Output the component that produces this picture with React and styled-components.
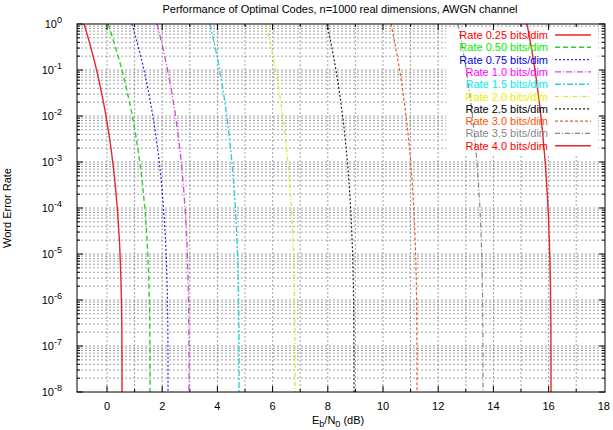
import React from "react";
import styled, { createGlobalStyle } from "styled-components";

const Global = createGlobalStyle`
  html, body { margin: 0; padding: 0; background: #fff; }
`;

const Frame = styled.div`
  width: 613px;
  height: 430px;
  background: #fff;
  font-family: "Liberation Sans", Arial, sans-serif;
`;

const Chart = styled.svg`
  display: block;
  font-family: "Liberation Sans", Arial, sans-serif;
  font-size: 11px;
`;

const L = 77, R = 605, T = 24, B = 392;
const xs = (v) => 107 + 27.6 * v;
const ys = (d) => T + 46 * d; // d decades below 1

const curves = [
  { label: "Rate 0.25 bits/dim", color: "#e8262a", x0: 84, x1: 122, dash: "", w: 1.4, tc: "#ff0000" },
  { label: "Rate 0.50 bits/dim", color: "#2fcf2f", x0: 108, x1: 150, dash: "5,3", w: 1.4, tc: "#00ee00" },
  { label: "Rate 0.75 bits/dim", color: "#2a2ad8", x0: 132, x1: 168, dash: "2,2", w: 1.2, tc: "#0000ee" },
  { label: "Rate 1.0 bits/dim", color: "#d050d8", x0: 157, x1: 189, dash: "6,2,1,2", w: 1.4, tc: "#ff00ff" },
  { label: "Rate 1.5 bits/dim", color: "#2cd0d8", x0: 210, x1: 239, dash: "6,2,2,2", w: 1.4, tc: "#00eeee" },
  { label: "Rate 2.0 bits/dim", color: "#e0e020", x0: 266, x1: 295, dash: "4,2,1,2", w: 1.2, tc: "#eeee00" },
  { label: "Rate 2.5 bits/dim", color: "#222", x0: 327, x1: 354, dash: "2,2", w: 1.2, tc: "#000" },
  { label: "Rate 3.0 bits/dim", color: "#e06030", x0: 391, x1: 417, dash: "3,2", w: 1.2, tc: "#ff5500" },
  { label: "Rate 3.5 bits/dim", color: "#888", x0: 458, x1: 483, dash: "5,2,1,2", w: 1.2, tc: "#888" },
  { label: "Rate 4.0 bits/dim", color: "#e8262a", x0: 527, x1: 551, dash: "", w: 1.4, tc: "#ff0000" },
];

function curvePath(c) {
  const pts = [];
  for (let i = 0; i <= 60; i++) {
    const s = i / 60;
    const f = 1 - Math.pow(1 - s, 3);
    pts.push(`${(c.x0 + (c.x1 - c.x0) * f).toFixed(1)},${ys(s * 8).toFixed(1)}`);
  }
  return "M" + pts.join(" L");
}

const grid = "#8a8a8a";

export default function App() {
  const vGrid = [];
  for (let v = 0; v <= 17; v++) vGrid.push(xs(v));
  const hGrid = [];
  const minor = [];
  for (let d = 0; d < 8; d++) {
    for (let m = 2; m <= 9; m++) {
      const y = ys(d + 1 - Math.log10(m));
      hGrid.push(y);
      minor.push(y);
    }
    if (d > 0) hGrid.push(ys(d));
  }
  return (
    <Frame>
      <Global />
      <Chart width="613" height="430" viewBox="0 0 613 430">
        <text x="340" y="13" textAnchor="middle">Performance of Optimal Codes, n=1000 real dimensions, AWGN channel</text>
        {vGrid.map((x, i) => (
          <line key={"v" + i} x1={x} x2={x} y1={T} y2={B} stroke={grid} strokeDasharray="2,2" strokeWidth="0.8" />
        ))}
        {hGrid.map((y, i) => (
          <line key={"h" + i} x1={L} x2={R} y1={y} y2={y} stroke={grid} strokeDasharray="2,2" strokeWidth="0.8" />
        ))}
        <rect x="446" y="27" width="152" height="127" fill="#fff" />
        {vGrid.map((x, i) => {
          const len = i % 2 === 0 ? 6 : 3;
          return (
            <g key={"t" + i}>
              <line x1={x} x2={x} y1={B} y2={B - len} stroke="#000" />
              <line x1={x} x2={x} y1={T} y2={T + len} stroke="#000" />
            </g>
          );
        })}
        {minor.map((y, i) => (
          <g key={"m" + i}>
            <line x1={L} x2={L + 3} y1={y} y2={y} stroke="#000" />
            <line x1={R} x2={R - 3} y1={y} y2={y} stroke="#000" />
          </g>
        ))}
        {[0, 1, 2, 3, 4, 5, 6, 7, 8].map((d) => (
          <g key={"yd" + d}>
            <line x1={L} x2={L + 6} y1={ys(d)} y2={ys(d)} stroke="#000" />
            <line x1={R} x2={R - 6} y1={ys(d)} y2={ys(d)} stroke="#000" />
            <text x="62" y={ys(d) + 4} textAnchor="end">
              10<tspan dy="-5" fontSize="9">{d === 0 ? "0" : "-" + d}</tspan>
            </text>
          </g>
        ))}
        {[0, 2, 4, 6, 8, 10, 12, 14, 16, 18].map((v) => (
          <text key={"xl" + v} x={xs(v)} y="410" textAnchor="middle">{v}</text>
        ))}
        <text x="312" y="424">
          E<tspan dy="3" fontSize="9">b</tspan><tspan dy="-3">/N</tspan><tspan dy="3" fontSize="9">0</tspan><tspan dy="-3"> (dB)</tspan>
        </text>
        <text transform="translate(11,208) rotate(-90)" textAnchor="middle">Word Error Rate</text>
        {curves.map((c, i) => (
          <path key={"c" + i} d={curvePath(c)} fill="none" stroke={c.color} strokeWidth={c.w} strokeDasharray={c.dash} />
        ))}
        {curves.map((c, i) => {
          const y = 35 + i * 12.3;
          return (
            <g key={"lg" + i}>
              <text x="548" y={y + 4} textAnchor="end" fill={c.tc}>{c.label}</text>
              <line x1="555" x2="591" y1={y} y2={y} stroke={c.color} strokeWidth={c.w} strokeDasharray={c.dash} />
            </g>
          );
        })}
        <rect x={L} y={T} width={R - L} height={B - T} fill="none" stroke="#000" />
      </Chart>
    </Frame>
  );
}
